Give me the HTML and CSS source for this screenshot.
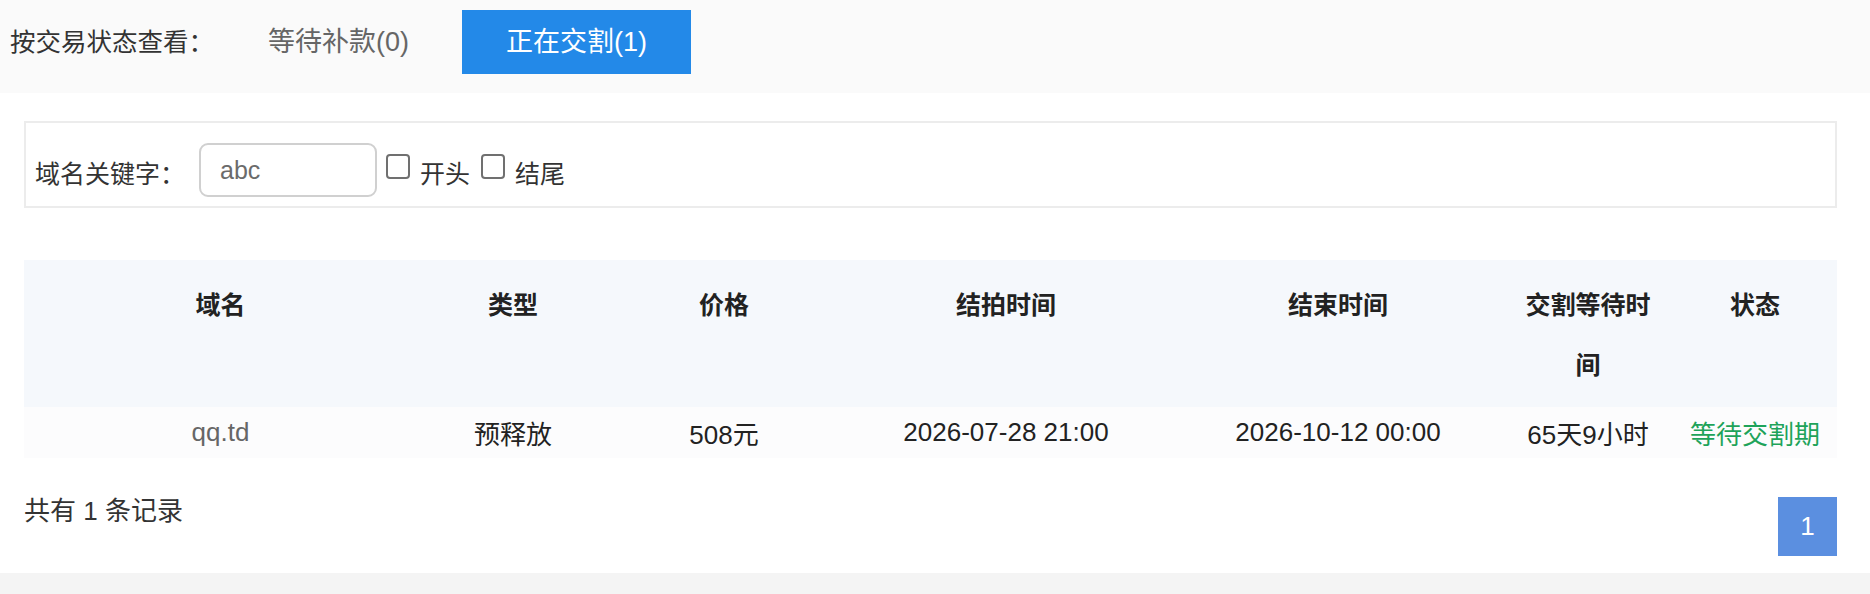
FILE: index.html
```html
<!DOCTYPE html>
<html lang="zh-CN">
<head>
<meta charset="utf-8">
<title>正在交割</title>
<link rel="stylesheet" href="styles.css">
</head>
<body>
<div class="status-bar">
  <span class="status-label">按交易状态查看：</span>
  <a class="tab">等待补款(0)</a>
  <a class="tab tab-active">正在交割(1)</a>
</div>
<div class="content">
  <div class="search-box">
    <span class="kw-label">域名关键字：</span>
    <input class="kw-input" type="text" placeholder="abc">
    <label class="check"><input class="check-box" type="checkbox"><span>开头</span></label>
    <label class="check"><input class="check-box" type="checkbox"><span>结尾</span></label>
  </div>
  <table class="list">
    <colgroup>
      <col class="c-domain"><col class="c-type"><col class="c-price"><col class="c-auction"><col class="c-end"><col class="c-wait"><col class="c-status">
    </colgroup>
    <thead>
      <tr>
        <th>域名</th><th>类型</th><th>价格</th><th>结拍时间</th><th>结束时间</th><th>交割等待时间</th><th>状态</th>
      </tr>
    </thead>
    <tbody>
      <tr>
        <td class="domain">qq.td</td><td>预释放</td><td>508元</td><td>2026-07-28 21:00</td><td>2026-10-12 00:00</td><td>65天9小时</td><td class="status-ok">等待交割期</td>
      </tr>
    </tbody>
  </table>
  <div class="list-footer">
    <span class="total">共有 1 条记录</span>
    <span class="page-num">1</span>
  </div>
</div>
<div class="page-end"></div>
</body>
</html>
```

FILE: styles.css
```css
* { box-sizing: border-box; }
html, body {
  margin: 0;
  padding: 0;
  background: #ffffff;
  font-family: "Liberation Sans", "Noto Sans CJK SC", sans-serif;
  color: #222;
}
.status-bar {
  display: flex;
  align-items: center;
  background: #fafafa;
  padding: 10px 10px 19px;
  height: 93px;
}
.status-label {
  font-size: 25.5px;
  color: #333;
  line-height: 64px;
}
.tab {
  font-size: 27px;
  color: #666;
  line-height: 64px;
  height: 64px;
  padding: 0 44px;
  margin-left: 9px;
  cursor: pointer;
}
.status-label + .tab { margin-left: 10px; }
.tab-active {
  background: #2389e8;
  color: #fff;
}
.content {
  padding: 0 33px 17px 24px;
}
.search-box {
  margin-top: 28px;
  height: 87px;
  border: 2px solid #ececec;
  display: flex;
  align-items: center;
  padding: 18px 9px 7px;
}
.kw-label {
  font-size: 25px;
  color: #333;
  margin-top: 3px;
}
.kw-input {
  width: 178px;
  height: 54px;
  margin-left: 14px;
  border: 2px solid #d0d0d0;
  border-radius: 9px;
  padding: 0 0 0 19px;
  font-family: inherit;
  font-size: 25px;
  color: #666;
  outline: none;
}
.kw-input::placeholder { color: #6b6b6b; }
.check {
  display: flex;
  align-items: center;
  margin-left: 9px;
  font-size: 25px;
  color: #333;
}
.check + .check { margin-left: 11px; }
.check-box {
  appearance: none;
  -webkit-appearance: none;
  width: 24px;
  height: 25px;
  margin: 0 10px 7px 0;
  border: 2px solid #707070;
  border-radius: 4px;
  background: #fff;
}
.check span { margin-top: 3px; }
.list {
  margin-top: 52px;
  width: 1813px;
  border-collapse: collapse;
  table-layout: fixed;
}
.c-domain { width: 393px; }
.c-type { width: 192px; }
.c-price { width: 230px; }
.c-auction { width: 334px; }
.c-end { width: 330px; }
.c-wait { width: 170px; }
.c-status { width: 164px; }
.list thead tr { background: #f5f8fc; }
.list th {
  font-size: 25px;
  font-weight: bold;
  color: #222;
  line-height: 60px;
  padding: 15px 12px 12px;
  vertical-align: top;
  text-align: center;
}
.list tbody tr { background: #fcfcfd; }
.list td {
  height: 51px;
  padding: 0 8px;
  font-size: 26px;
  text-align: center;
  vertical-align: middle;
  color: #222;
  white-space: nowrap;
}
.list td.domain { color: #666; }
.list td.status-ok { color: #1ea35a; }
.list-footer {
  margin-top: 39px;
  display: flex;
  justify-content: space-between;
  align-items: flex-start;
}
.total {
  font-size: 26px;
  line-height: 28px;
  color: #333;
}
.page-num {
  width: 59px;
  height: 59px;
  line-height: 59px;
  text-align: center;
  background: #5b8fe0;
  color: #fff;
  font-size: 26px;
}
.page-end {
  height: 40px;
  background: #f4f4f4;
}
```
